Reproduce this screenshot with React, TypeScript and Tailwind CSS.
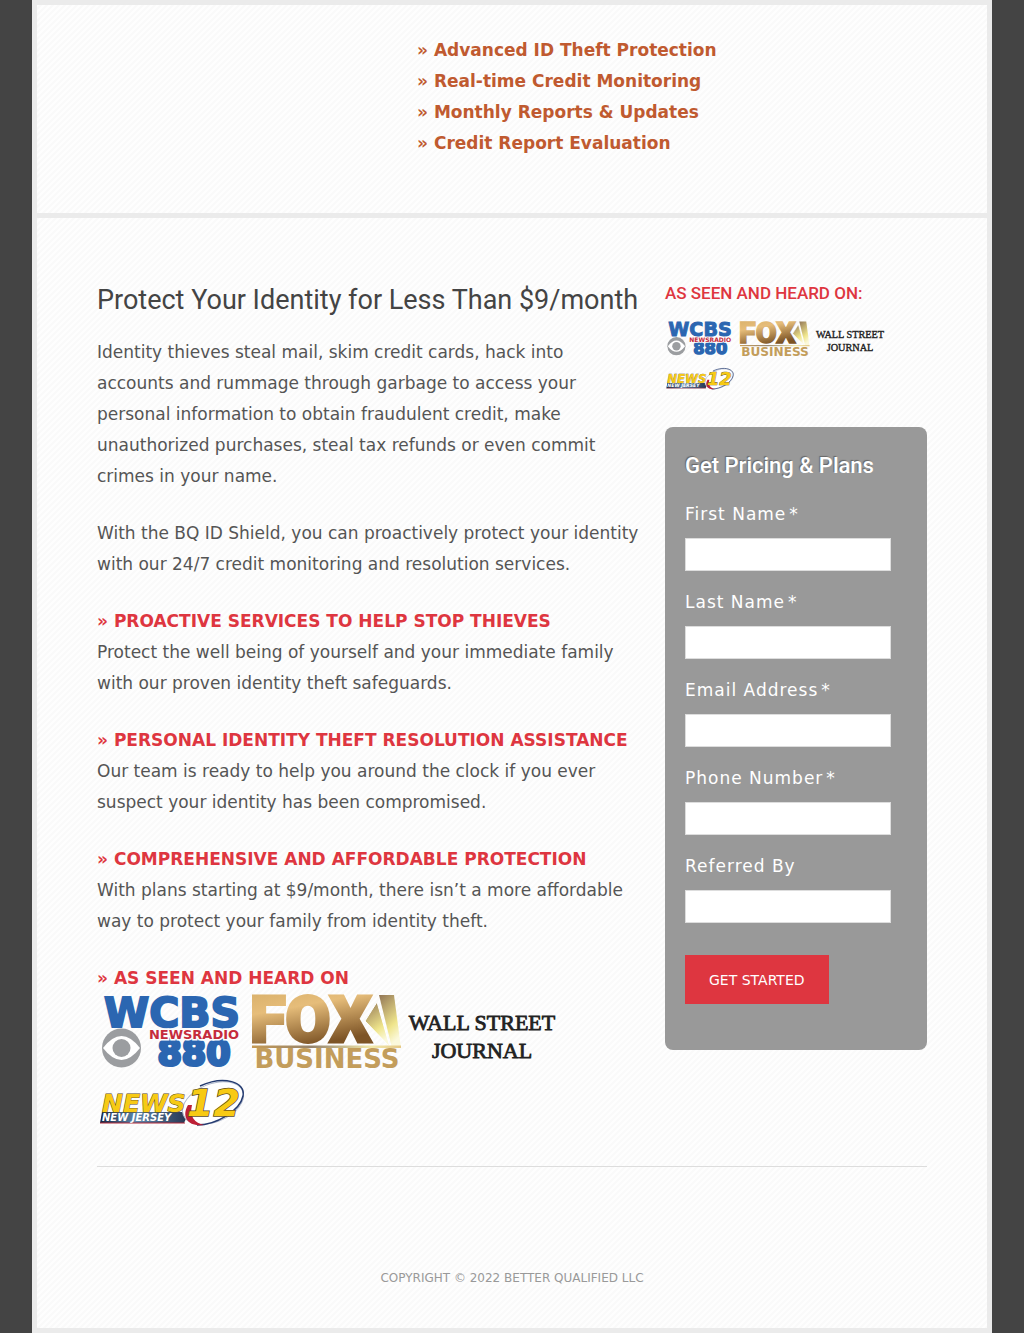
import React from "react";

const display = "font-[Roboto,'Liberation_Sans',sans-serif] whitespace-nowrap";
const stripes =
  "bg-[linear-gradient(135deg,#fefefe_25%,#fafafa_25%,#fafafa_50%,#fefefe_50%,#fefefe_75%,#fafafa_75%)] bg-[length:6px_6px]";

function WcbsLogo({ className }: { className: string }) {
  return (
    <svg viewBox="0 0 150 75" className={className} role="img" aria-label="WCBS Newsradio 880">
      <g fontFamily="DejaVu Sans" fontWeight="700">
        <text x="75" y="33" fontSize="41" textAnchor="middle" fill="#2b66b1" stroke="#2b66b1" strokeWidth="2">
          WCBS
        </text>
        <text x="97" y="71" fontSize="35" textAnchor="middle" fill="#2b66b1" stroke="#2b66b1" strokeWidth="3">
          880
        </text>
        <text
          x="97"
          y="45"
          fontSize="13"
          textAnchor="middle"
          fill="#c52b3c"
          stroke="#fdfdfd"
          strokeWidth="3"
          paintOrder="stroke"
        >
          NEWSRADIO
        </text>
      </g>
      <circle cx="24.500" cy="54" r="19.500" fill="#9b9da0" />
      <path d="M6 54Q24.500 30 43 54Q24.500 78 6 54Z" fill="#fff" />
      <circle cx="24.500" cy="54" r="9" fill="#9b9da0" />
    </svg>
  );
}

function FoxLogo({ className, id }: { className: string; id: string }) {
  return (
    <svg viewBox="0 0 150 75" className={className} role="img" aria-label="Fox Business">
      <defs>
        <linearGradient id={id + "-gold"} x1="0" y1="0" x2="0.3" y2="1">
          <stop offset="0.1" stopColor="#d9b06a" />
          <stop offset="0.4" stopColor="#e6bd7a" />
          <stop offset="0.9" stopColor="#7d5426" />
        </linearGradient>
        <linearGradient id={id + "-beam"} x1="0" y1="0" x2="0.4" y2="1">
          <stop offset="0" stopColor="#927656" />
          <stop offset="0.7" stopColor="#efe58c" />
          <stop offset="1" stopColor="#fbf9dc" />
        </linearGradient>
        <linearGradient id={id + "-rule"} x1="0" y1="0" x2="1" y2="0">
          <stop offset="0" stopColor="#c59a55" />
          <stop offset="0.4" stopColor="#96846c" />
          <stop offset="0.8" stopColor="#f2e9ab" />
          <stop offset="1" stopColor="#e5c886" />
        </linearGradient>
      </defs>
      <text
        x="-2"
        y="48"
        fontSize="65"
        fontFamily="Roboto"
        fontWeight="900"
        fill={"url(#" + id + "-gold)"}
        stroke={"url(#" + id + "-gold)"}
        strokeWidth="3"
      >
        FOX
      </text>
      <path d="M125 8L138 53L113 27Z" fill={"url(#" + id + "-beam)"} stroke="#fff" />
      <path d="M127 1H142L149 54H140Z" fill={"url(#" + id + "-beam)"} />
      <rect y="51.500" width="149" height="2.500" fill={"url(#" + id + "-rule)"} />
      <text x="75" y="74" fontSize="26" textAnchor="middle" fontFamily="DejaVu Sans" fontWeight="700" fill="#c39d5b">
        BUSINESS
      </text>
    </svg>
  );
}

function JournalLogo({ className }: { className: string }) {
  return (
    <svg viewBox="0 0 150 75" className={className} role="img" aria-label="Wall Street Journal">
      <g fontFamily="Liberation Serif" textAnchor="middle" fill="#222" stroke="#222" strokeWidth="0.8">
        <text x="75" y="36" fontSize="22">
          WALL STREET
        </text>
        <text x="75" y="64" fontSize="22">
          JOURNAL
        </text>
      </g>
    </svg>
  );
}

function News12Logo({ className, id }: { className: string; id: string }) {
  return (
    <svg viewBox="0 0 150 75" className={className} role="img" aria-label="News 12 New Jersey">
      <defs>
        <linearGradient id={id + "-bar"} x1="0" y1="0" x2="1" y2="0">
          <stop offset="0" stopColor="#18233f" />
          <stop offset="0.4" stopColor="#5c86aa" />
          <stop offset="1" stopColor="#26324e" />
        </linearGradient>
      </defs>
      <path d="M5 43H92L87 54H3Z" fill={"url(#" + id + "-bar)"} />
      <path d="M3 54H88" stroke="#b02736" />
      <ellipse cx="116" cy="34" rx="32" ry="19" transform="rotate(-22 116 34)" fill="#fff" stroke="#aeb7cb" />
      <path d="M103 17C127 6 149 13 146 27C143 42 119 56 100 56" fill="none" stroke="#243b70" strokeWidth="1.500" />
      <path d="M91 36C84 48 91 58 107 56C98 54 92 48 95 36Z" fill="#bd2036" />
      <g fontFamily="DejaVu Sans" fontWeight="700" fontStyle="italic">
        <text x="5" y="43" fontSize="25" fill="#f7ca14" stroke="#5c4c1c" paintOrder="stroke">
          NEWS
        </text>
        <text x="5" y="52" fontSize="10" fill="#fff">
          NEW JERSEY
        </text>
        <text x="90" y="47" fontSize="38" fill="#f7ca14" stroke="#5c4c1c" strokeWidth="1.500" paintOrder="stroke">
          12
        </text>
      </g>
    </svg>
  );
}

const benefits = [
  "Advanced ID Theft Protection",
  "Real-time Credit Monitoring",
  "Monthly Reports & Updates",
  "Credit Report Evaluation",
];

const services = [
  {
    title: "PROACTIVE SERVICES TO HELP STOP THIEVES",
    body: "Protect the well being of yourself and your immediate family with our proven identity theft safeguards.",
  },
  {
    title: "PERSONAL IDENTITY THEFT RESOLUTION ASSISTANCE",
    body: "Our team is ready to help you around the clock if you ever suspect your identity has been compromised.",
  },
  {
    title: "COMPREHENSIVE AND AFFORDABLE PROTECTION",
    body: "With plans starting at $9/month, there isn’t a more affordable way to protect your family from identity theft.",
  },
];

const fields = [
  { id: "first", label: "First Name", type: "text", required: true },
  { id: "last", label: "Last Name", type: "text", required: true },
  { id: "email", label: "Email Address", type: "email", required: true },
  { id: "phone", label: "Phone Number", type: "tel", required: true },
  { id: "referred", label: "Referred By", type: "text", required: false },
];

export default function App() {
  return (
    <div className="bg-[#444] px-8 font-['DejaVu_Sans',sans-serif] text-[17px] leading-[31px] text-[#555]">
      <div className={`border-[5px] border-[#ebebeb] ${stripes}`}>
        <section className="border-b-[5px] border-[#ebebeb] pt-[30px] pb-[54px]">
          <ul className="ml-[40%] font-bold text-[#c05a30]">
            {benefits.map((b) => (
              <li key={b}>» {b}</li>
            ))}
          </ul>
        </section>

        <div className="px-[60px] pt-[60px]">
          <div className="flex items-start gap-6 border-b border-[#ddd] pb-[22px]">
            <main className="min-w-0 flex-1">
              <h1 className={`mb-[15px] text-[27px] leading-[44px] text-[#444] ${display}`}>
                Protect Your Identity for Less Than $9/month
              </h1>
              <div className="space-y-[26px]">
                <p>
                  Identity thieves steal mail, skim credit cards, hack into accounts and rummage through garbage to
                  access your personal information to obtain fraudulent credit, make unauthorized purchases, steal tax
                  refunds or even commit crimes in your name.
                </p>
                <p>
                  With the BQ ID Shield, you can proactively protect your identity with our 24/7 credit monitoring and
                  resolution services.
                </p>
                {services.map((s) => (
                  <section key={s.title}>
                    <h2 className="font-bold text-[#de3640]">» {s.title}</h2>
                    <p>{s.body}</p>
                  </section>
                ))}
                <section>
                  <h2 className="font-bold text-[#de3640]">» AS SEEN AND HEARD ON</h2>
                  <div className="flex flex-wrap gap-x-[5px]">
                    <WcbsLogo className="h-[75px] w-[150px] overflow-visible" />
                    <FoxLogo className="h-[75px] w-[150px] overflow-visible" id="fox-main" />
                    <JournalLogo className="h-[75px] w-[150px] overflow-visible" />
                    <News12Logo className="h-[75px] w-[150px] overflow-visible" id="news-main" />
                  </div>
                </section>
              </div>
            </main>

            <aside className="w-[262px] shrink-0">
              <h2 className={`mb-3 text-[17px] leading-[31px] font-medium text-[#de3640] ${display}`}>
                AS SEEN AND HEARD ON:
              </h2>
              <div className="mb-[29px] flex flex-wrap gap-x-[5px] gap-y-[7px]">
                <WcbsLogo className="h-[35px] w-[70px] overflow-visible" />
                <FoxLogo className="h-[35px] w-[70px] overflow-visible" id="fox-side" />
                <JournalLogo className="h-[35px] w-[70px] overflow-visible" />
                <News12Logo className="h-[35px] w-[70px] overflow-visible" id="news-side" />
              </div>
              <form
                className="rounded-lg bg-[#999] px-5 pt-5 pb-[46px] text-white"
                onSubmit={(e: React.FormEvent) => e.preventDefault()}
              >
                <h2
                  className={`mb-[15px] text-[22px] leading-[37px] font-medium [text-shadow:-1px_-1px_1px_#666] ${display}`}
                >
                  Get Pricing &amp; Plans
                </h2>
                <div className="space-y-4">
                  {fields.map((f) => (
                    <div key={f.id}>
                      <label htmlFor={f.id} className="mb-2 block tracking-[1px]">
                        {f.label}
                        {f.required && <span className="ml-[3px]">*</span>}
                      </label>
                      <div className="pr-4">
                        <input
                          id={f.id}
                          type={f.type}
                          required={f.required}
                          className="block h-[33px] w-full border border-[#ddd] bg-white px-2 text-[#555]"
                        />
                      </div>
                    </div>
                  ))}
                </div>
                <button type="submit" className="mt-8 block h-[49px] bg-[#de3640] px-6 text-sm">
                  GET STARTED
                </button>
              </form>
            </aside>
          </div>
          <footer className="pt-24 pb-[34px] text-center text-xs leading-[31px] text-[#999]">
            COPYRIGHT © 2022 BETTER QUALIFIED LLC
          </footer>
        </div>
      </div>
    </div>
  );
}
